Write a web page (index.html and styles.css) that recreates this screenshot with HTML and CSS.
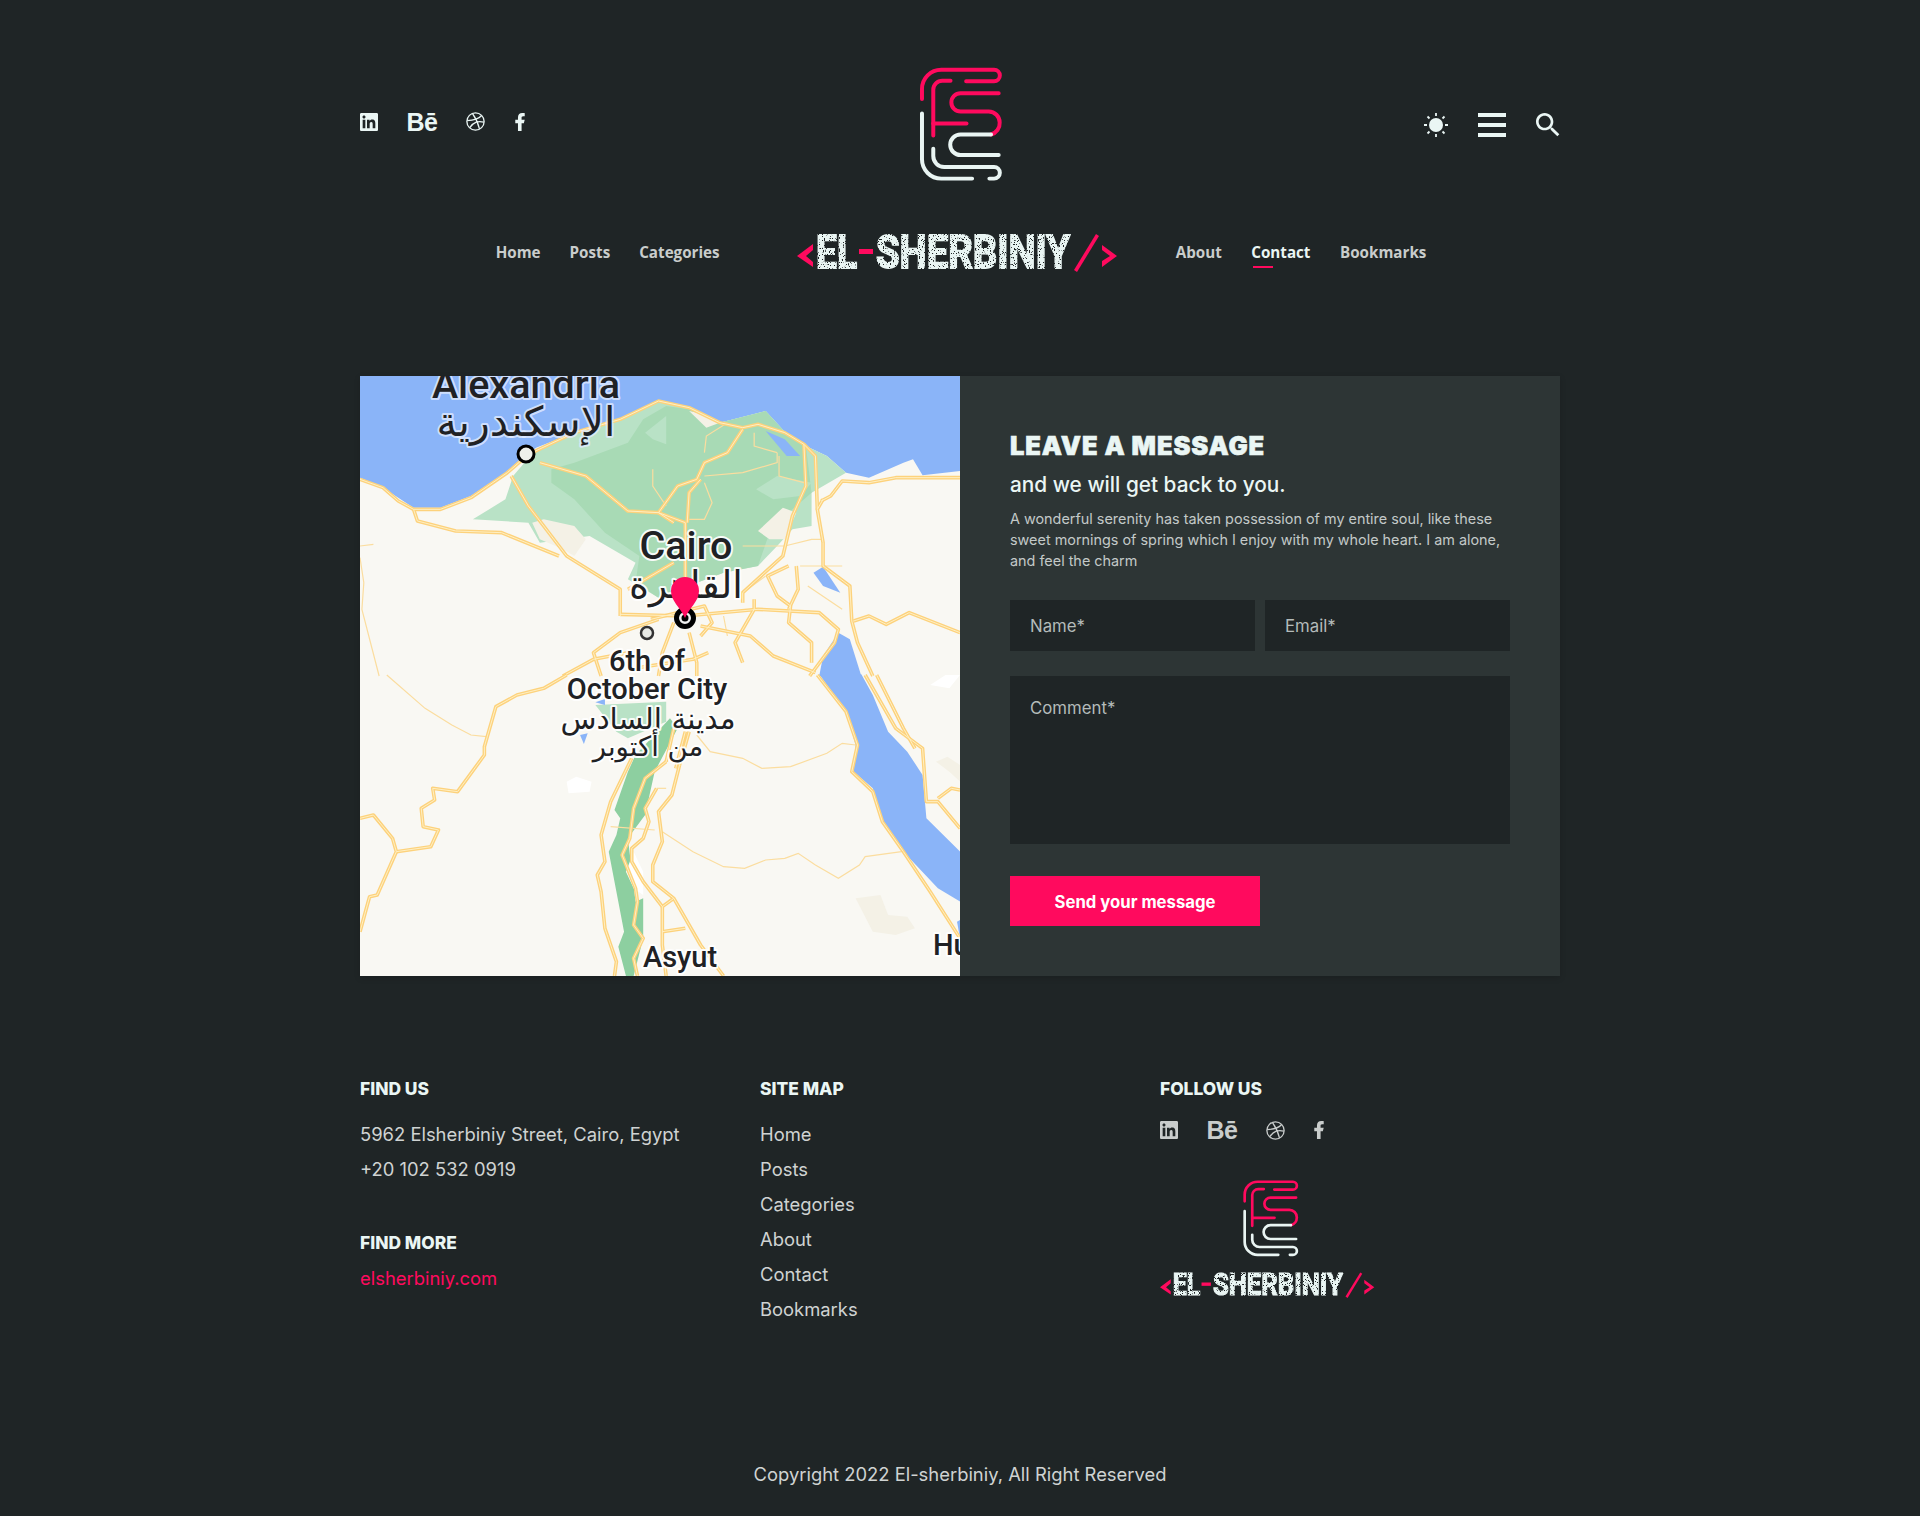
FILE: index.html
```html
<!DOCTYPE html>
<html lang="en">
<head>
<meta charset="utf-8">
<title>Contact - El-Sherbiniy</title>
<link rel="stylesheet" href="styles.css">
</head>
<body>
<svg class="defs" width="0" height="0" aria-hidden="true">
  <defs>
    <filter id="worn" x="0" y="0" width="100%" height="100%">
      <feTurbulence type="fractalNoise" baseFrequency="0.8" numOctaves="2" seed="4" result="n"/>
      <feColorMatrix in="n" type="matrix" values="0 0 0 0 0  0 0 0 0 0  0 0 0 0 0  0 0 0 -14 9.600" result="m"/>
      <feComposite in="SourceGraphic" in2="m" operator="in"/>
    </filter>
    <symbol id="logo-mark" viewBox="412 79 256 352">
      <g class="mk-red">
        <path d="M424 178V148a58 58 0 0 1 58-58H641a17.500 17.500 0 0 1 0 35H557"/>
        <path d="M458 288V150a27 27 0 0 1 27-27H510"/>
        <path d="M458 252H558"/>
        <path d="M655 161H540a27.500 27.500 0 0 0 0 55H625a33 33 0 0 1 33 33a35 35 0 0 1-26 36"/>
      </g>
      <g class="mk-white">
        <path d="M632 285H540a31 31 0 0 0 0 62H655"/>
        <path d="M458 328V350a33 33 0 0 0 33 33H641a17.500 17.500 0 0 1 0 35H627"/>
        <path d="M424 222V360a58 58 0 0 0 58 58H575"/>
      </g>
    </symbol>
    <symbol id="wordmark" viewBox="0 0 321 40">
      <polygon class="wm-red" points="0,24 16,12 16,18 9,24 16,30 16,35"/>
      <g class="wm-text" filter="url(#worn)">
        <text x="19" y="35.500" textLength="41" lengthAdjust="spacingAndGlyphs">EL</text>
        <text x="79" y="35.500" textLength="194" lengthAdjust="spacingAndGlyphs">SHERBINIY</text>
      </g>
      <rect class="wm-red" x="62" y="17" width="14" height="5"/>
      <polygon class="wm-red" points="277,38 299,2 302,4 280,40"/>
      <polygon class="wm-red" points="305,13 320,24 305,35 305,29 313,24 305,18"/>
    </symbol>
    <symbol id="i-in" viewBox="0 0 24 24"><path d="M20.447 20.452h-3.554v-5.569c0-1.328-.027-3.037-1.852-3.037-1.853 0-2.136 1.445-2.136 2.939v5.667H9.351V9h3.414v1.561h.046c.477-.9 1.637-1.85 3.37-1.850 3.601 0 4.267 2.370 4.267 5.455v6.286zM5.337 7.433c-1.144 0-2.063-.926-2.063-2.065 0-1.138.92-2.063 2.063-2.063 1.14 0 2.064.925 2.064 2.063 0 1.139-.925 2.065-2.064 2.065zm1.782 13.019H3.555V9h3.564v11.452zM22.225 0H1.771C.792 0 0 .774 0 1.729v20.542C0 23.227.792 24 1.771 24h20.451C23.200 24 24 23.227 24 22.271V1.729C24 .774 23.200 0 22.222 0h.003z"/></symbol>
    <symbol id="i-dr" viewBox="1 1 22 22"><circle class="line" cx="12" cy="12" r="10"/><path class="line" d="M8.560 2.750c4.370 6.030 6.020 9.420 8.030 17.720m2.540-15.380c-3.720 4.350-8.940 5.660-16.880 5.850m19.500 1.900c-3.500-.93-6.630-.82-8.940 0-2.580.92-5.010 2.860-7.440 6.320"/></symbol>
    <symbol id="i-fb" viewBox="7 2 10.500 20"><path d="M14 13.500h2.500l1-4H14v-2c0-1.030 0-2 2-2h1.500V2.140c-.326-.043-1.557-.14-2.857-.14C11.928 2 10 3.657 10 6.700v2.800H7v4h3V22h4v-8.500z"/></symbol>
    <g id="r4">
      <path d="M0,310L60,335L100,375L140,400L210,400L290,365L385,290L440,235L560,170L680,130L780,75L860,95L940,140L1000,155L1040,145L1110,170L1160,205L1190,240L1195,400"/>
      <path d="M395,300L440,390L540,540L680,640L680,720"/>
      <path d="M470,260L590,300L700,405L780,410L850,440L850,600L855,640"/>
      <path d="M1000,160L960,230L900,260L880,310L830,330L780,410L820,440"/>
      <path d="M890,310L860,350L855,440"/>
      <path d="M140,400L150,435L250,465L370,470L520,540"/>
      <path d="M700,640L820,560"/>
      <path d="M1160,205L1165,330L1130,420L1105,540L1000,650L1000,680"/>
      <path d="M1210,370L1195,400L1210,500L1210,570L1280,630L1285,735L1300,800L1340,900"/>
      <path d="M1568,305L1400,305L1330,320L1260,315L1230,360L1205,375"/>
      <path d="M1290,735L1330,720L1375,745L1435,710L1568,770"/>
      <path d="M680,715L850,720L1040,700L1200,710L1250,760L1240,800L1175,900"/>
      <path d="M1030,670V700L980,800L1000,860"/>
      <path d="M890,750L1020,780L1080,840L1190,890"/>
      <path d="M780,730L680,770L610,830L630,900"/>
      <path d="M820,740L790,830L780,900"/>
      <path d="M860,770L880,860V900"/>
      <path d="M1120,570L1065,600L1090,660L1125,690L1120,740L1180,800V860"/>
      <path d="M1140,570L1145,640L1120,700"/>
      <path d="M530,900L610,850L700,830"/>
      <path d="M760,730L900,690L920,740L890,780"/>
      <path d="M700,880L870,850L910,830"/>
    </g>
    <g id="r5">
      <path d="M0,430L35,420L85,490L95,530L45,660L25,665L0,770"/>
      <path d="M95,530L185,515L205,465L165,455L160,400L195,375L190,340L255,350L325,240L325,215L355,95L410,60L480,40L540,0"/>
      <path d="M710,250L655,380L630,480L640,560L620,600L630,650L640,760L670,860L665,903"/>
      <path d="M800,260L745,310L715,400L705,490L685,540L720,640L725,680L715,750L740,790L715,850L725,903"/>
      <path d="M835,270L815,360L780,410L790,500L765,570L765,620L820,670L890,810L950,903"/>
      <path d="M775,340L745,400L755,440L740,490L710,520L710,560L740,620L790,695L820,670"/>
      <path d="M790,695V810L800,903"/>
      <path d="M790,770L850,760"/>
      <path d="M1195,0L1270,110L1300,210L1285,290L1340,350L1365,440L1420,530L1490,650L1568,790"/>
      <path d="M1320,0L1400,160L1470,220L1480,380L1510,380L1568,460"/>
      <path d="M1350,0L1420,160L1450,220"/>
      <path d="M1510,370L1545,340L1568,345"/>
      <path d="M820,160L800,260M850,170L825,280M860,170L835,270"/>
    </g>
  </defs>
</svg>

<div class="page">
  <header class="site-header">
    <div class="top-row">
      <div class="socials">
        <a class="soc" href="#"><svg class="ic-in"><use href="#i-in"/></svg></a>
        <a class="soc be" href="#">Bē</a>
        <a class="soc" href="#"><svg class="ic-dr"><use href="#i-dr"/></svg></a>
        <a class="soc soc-f" href="#"><svg class="ic-fb"><use href="#i-fb"/></svg></a>
      </div>
      <svg class="logo-lg"><use href="#logo-mark"/></svg>
      <div class="tools">
        <svg class="tool-sun" viewBox="0 0 24 24">
          <circle cx="12" cy="12" r="7"/>
          <g class="rays"><path d="M12 0v3M12 21v3M0 12h3M21 12h3M3.500 3.500l2 2M18.500 18.500l2 2M3.500 20.500l2-2M18.500 5.500l2-2"/></g>
        </svg>
        <div class="burger"><span></span><span></span><span></span></div>
        <svg class="tool-search" viewBox="3 3 18 18"><path d="M15.500 14h-.79l-.28-.27C15.410 12.590 16 11.110 16 9.500 16 5.910 13.090 3 9.500 3S3 5.910 3 9.500 5.910 16 9.500 16c1.610 0 3.090-.59 4.230-1.570l.27.28v.79l5 4.990L20.490 19l-4.990-5zm-6 0C7.010 14 5 11.990 5 9.500S7.010 5 9.500 5 14 7.010 14 9.500 11.990 14 9.500 14z"/></svg>
      </div>
    </div>
    <nav class="nav-row">
      <div class="nav-group nav-left">
        <a href="#">Home</a><a href="#">Posts</a><a href="#">Categories</a>
      </div>
      <svg class="wm-lg"><use href="#wordmark"/></svg>
      <div class="nav-group nav-right">
        <a href="#">About</a><a class="active" href="#">Contact</a><a href="#">Bookmarks</a>
      </div>
    </nav>
  </header>

  <main class="contact">
    <svg class="map" viewBox="0 0 600 600" role="img" aria-label="Map of northern Egypt">
      <rect class="land" width="600" height="600"/>
      <g transform="scale(.38270 .33333)">
        <polygon class="sea" points="0,0 1568,0 1568,285 1470,298 1445,250 1420,260 1330,305 1270,290 1220,240 1165,210 1120,180 1060,105 940,140 860,95 780,75 680,130 560,170 460,215 380,290 290,360 210,395 140,395 60,335 0,305"/>
        <polygon class="g-light" points="400,300 460,220 560,170 680,130 780,75 860,95 940,140 1060,105 1120,180 1165,210 1220,240 1270,290 1180,350 1180,450 1130,460 1090,510 1040,570 950,590 880,620 780,665 700,610 720,560 600,480 470,500 440,440 295,430 380,370"/>
        <polygon class="g-dark" points="500,280 560,260 700,200 740,130 800,90 860,100 940,140 1060,105 1120,180 1165,210 1180,350 1130,400 1070,470 1040,570 950,590 880,620 780,665 720,620 730,540 640,470 560,370 500,320"/>
        <polygon class="g-light" points="745,170 800,120 800,205 765,190"/>
        <polygon class="g-light" points="1035,340 1090,300 1180,320 1150,360 1080,370"/>
        <polygon class="beige" points="450,440 480,430 560,450 590,490 560,540 530,520 470,490"/>
        <polygon class="beige" points="1040,465 1105,395 1140,410 1110,490 1070,490"/>
        <polygon class="beige" points="860,105 900,115 940,140 905,155"/>
        <polygon class="sea" points="1185,590 1210,572 1255,650 1210,630"/>
        <polygon class="sea" points="1060,165 1110,190 1150,240 1115,240"/>
        <polygon class="sea" points="1200,900 1210,840 1250,770 1280,790 1310,900"/>
        <g class="thin">
          <path d="M765,280V330L800,390M900,300L1000,290L1090,260V230M1095,240V300L1160,320M1030,170V210L1090,230M900,230L905,180L960,140M900,320L920,380L900,430H860M0,510L35,505M0,545L10,620L5,700L50,900"/>
          <path d="M1000,510H1110L1180,490H1210M1150,570H1260M1170,630L1260,700M1000,650L1060,600M950,720L960,780"/>
        </g>
        <use class="road-out" href="#r4"/>
        <use class="road-in" href="#r4"/>
      </g>
      <g transform="translate(0 299) scale(.38270 .33333)">
        <polygon class="sea" points="1200,-2 1310,-2 1340,60 1380,170 1430,230 1470,300 1480,430 1568,530 1568,680 1510,640 1420,530 1360,430 1340,340 1290,290 1295,210 1270,110"/>
        <polygon class="sea" points="1560,740 1568,735 1568,790"/>
        <polygon class="beige" points="1295,670 1360,660 1380,720 1430,725 1450,760 1400,780 1340,770"/>
        <polygon class="beige" points="1505,260 1535,245 1568,270 1568,320 1540,290"/>
        <polygon class="white" points="1490,30 1530,0 1568,0 1540,40"/>
        <polygon class="white" points="540,320 565,305 605,320 600,350 545,355"/>
        <polygon class="g-deep" points="810,130 830,160 770,290 745,420 700,490 720,680 740,670 740,790 715,903 695,903 675,815 690,770 650,530 670,480 680,430 665,405 700,290 720,240"/>
        <polygon class="g-light" points="615,90 800,80 800,140 700,190 670,170"/>
        <polygon class="white" points="715,530 740,590 740,660 715,640 695,590"/>
        <polygon class="sea" points="615,82 640,72 640,90"/>
        <polygon class="sea" points="575,180 595,175 585,207"/>
        <g class="thin">
          <path d="M655,455L770,465"/>
          <path d="M790,470L870,530L950,575L1005,580L1060,555L1110,550L1145,535L1190,570L1250,610L1305,570L1320,545L1415,530"/>
          <path d="M880,180L915,230L1000,250L1050,280L1125,275L1220,235L1260,205L1295,210"/>
          <path d="M70,0L170,100L240,150L290,180L330,185"/>
          <path d="M775,340H800"/>
        </g>
        <use class="road-out" href="#r5"/>
        <use class="road-in" href="#r5"/>
      </g>

      <g class="lbl lbl-water">
        <text class="en-lg" x="166" y="22">Alexandria</text>
        <text class="ar-lg" x="166" y="60">الإسكندرية</text>
      </g>
      <circle class="dot" cx="166" cy="78" r="8"/>
      <g class="lbl">
        <text class="en-lg" x="326" y="183">Cairo</text>
        <text class="ar-lg ar-cairo" x="326" y="222">القاهرة</text>
        <text class="en-md" x="287" y="295">6th of</text>
        <text class="en-md" x="287" y="323">October City</text>
        <text class="ar-md" x="288" y="353">مدينة السادس</text>
        <text class="ar-md ar-sm" x="288" y="380">من أكتوبر</text>
        <text class="en-md" x="320" y="591">Asyut</text>
        <text class="en-md start" x="573" y="579">Hu</text>
      </g>
      <circle class="dot-sm" cx="287" cy="257" r="6"/>
      <circle class="ring" cx="325" cy="242" r="8.500"/>
      <circle class="core" cx="325" cy="242" r="3.500"/>
      <path class="pin" d="M325 242C320 231 311 225 311 215a14 14 0 0 1 28 0C339 225 330 231 325 242Z"/>
    </svg>

    <section class="panel">
      <h2 class="panel-title">LEAVE A MESSAGE</h2>
      <h3 class="panel-sub">and we will get back to you.</h3>
      <p class="panel-text">A wonderful serenity has taken possession of my entire soul, like these sweet mornings of spring which I enjoy with my whole heart. I am alone, and feel the charm</p>
      <form class="form">
        <div class="form-row">
          <input class="field" type="text" placeholder="Name*">
          <input class="field" type="email" placeholder="Email*">
        </div>
        <textarea class="field area" placeholder="Comment*"></textarea>
        <button class="send" type="button">Send your message</button>
      </form>
    </section>
  </main>

  <footer class="footer">
    <div class="cols">
      <div class="col">
        <h4>FIND US</h4>
        <p>5962 Elsherbiniy Street, Cairo, Egypt</p>
        <p>+20 102 532 0919</p>
        <h4 class="more">FIND MORE</h4>
        <p><a class="pink" href="#">elsherbiniy.com</a></p>
      </div>
      <div class="col">
        <h4>SITE MAP</h4>
        <p>Home</p><p>Posts</p><p>Categories</p><p>About</p><p>Contact</p><p>Bookmarks</p>
      </div>
      <div class="col">
        <h4>FOLLOW US</h4>
        <div class="socials foot-soc">
          <a class="soc" href="#"><svg class="ic-in"><use href="#i-in"/></svg></a>
          <a class="soc be" href="#">Bē</a>
          <a class="soc" href="#"><svg class="ic-dr"><use href="#i-dr"/></svg></a>
          <a class="soc" href="#"><svg class="ic-fb"><use href="#i-fb"/></svg></a>
        </div>
        <div class="foot-brand">
          <svg class="logo-sm"><use href="#logo-mark"/></svg>
          <svg class="wm-sm"><use href="#wordmark"/></svg>
        </div>
      </div>
    </div>
    <p class="copy">Copyright 2022 El-sherbiniy, All Right Reserved</p>
  </footer>
</div>
</body>
</html>
```
FILE: styles.css
```css
* { box-sizing: border-box; }
html, body { margin: 0; padding: 0; }
body {
  background: #1f2526;
  color: #cfd3d2;
  font-family: Inter, "Open Sans", sans-serif;
  height: 1516px;
  overflow: hidden;
}
a { color: inherit; text-decoration: none; }
.defs { position: absolute; }

.page { width: 1200px; margin: 0 auto; padding-top: 66px; }

/* header */
.top-row { display: flex; justify-content: space-between; align-items: center; height: 117px; }
.socials { display: flex; align-items: center; gap: 28.500px; color: #eaf6f4; width: 300px; margin-top: -6px; }
.soc { display: flex; align-items: center; height: 18px; }
.soc-f { margin-left: 1px; }
.soc svg { fill: currentColor; display: block; }
.ic-in { width: 18px; height: 18px; }
.ic-dr { width: 19px; height: 19px; }
.ic-fb { width: 10px; height: 18px; }
.line { fill: none; stroke: currentColor; stroke-width: 1.5; }
.be { font: 700 25px/18px "Liberation Sans", sans-serif; width: 31px; letter-spacing: -.5px; }

.logo-lg { width: 85px; height: 117px; display: block; }
.mk-red, .mk-white { fill: none; stroke-width: 12; stroke-linecap: round; }
.mk-red { stroke: #ff0a5e; }
.mk-white { stroke: #e9f5f3; }

.tools { display: flex; align-items: center; justify-content: flex-end; gap: 30px; width: 300px; margin-top: 1px; }
.tool-sun { width: 24px; height: 24px; fill: #eaf6f4; }
.rays { fill: none; stroke: #eaf6f4; stroke-width: 1.8; }
.burger { width: 28px; height: 24px; display: flex; flex-direction: column; justify-content: space-between; }
.burger span { height: 4px; background: #eaf6f4; display: block; }
.tool-search { width: 24px; height: 24px; fill: #eaf6f4; }

.nav-row { display: flex; align-items: center; justify-content: center; height: 40px; margin-top: 49px; padding-left: 2px; }
.nav-group { display: flex; gap: 29.500px; font: 700 15.200px/20px "Open Sans", sans-serif; color: #c9cdcc; }
.nav-left { gap: 29px; margin-right: 77px; }
.nav-right { margin-left: 58px; }
.nav-group a { position: relative; }
.nav-group .active { color: #eaf6f4; }
.nav-group .active::after {
  content: "";
  position: absolute;
  left: 2px;
  bottom: -6px;
  width: 20px;
  height: 2px;
  background: #ff0a5e;
}
.wm-lg { width: 321px; height: 40px; display: block; }
.wm-red { fill: #ff0a5e; }
.wm-text text {
  font-family: Roboto, sans-serif;
  font-weight: 700;
  font-size: 46px;
  fill: #e9f5f3;
  stroke: #e9f5f3;
  stroke-width: 1.800px;
}

/* contact */
.contact { display: grid; grid-template-columns: 600px 600px; margin-top: 104px; box-shadow: 0 2px 6px rgba(0,0,0,.15); }
.map { display: block; width: 600px; height: 600px; }
.land { fill: #f9f8f3; }
.sea { fill: #8ab4f8; }
.g-light { fill: #b9e2c6; }
.g-dark { fill: #a8dab5; }
.g-deep { fill: #8dcfa0; }
.beige { fill: #f4f1e6; }
.white { fill: #ffffff; }
.road-out, .road-in { fill: none; stroke-linejoin: round; }
.road-out { stroke: #fdd27c; stroke-width: 3.600px; }
.road-in { stroke: #fff0c4; stroke-width: 1px; }
#r4 path, #r5 path { vector-effect: non-scaling-stroke; }
.thin path {
  fill: none;
  stroke: #fbdd9f;
  stroke-width: 1.200;
  vector-effect: non-scaling-stroke;
}
.lbl text {
  text-anchor: middle;
  fill: #202124;
  stroke: rgba(255,255,255,.92);
  stroke-width: 4px;
  paint-order: stroke;
  stroke-linejoin: round;
}
.lbl-water text { stroke: rgba(225,235,255,.8); }
.lbl .start { text-anchor: start; }
.en-lg { font: 500 39.500px Roboto, sans-serif; }
.en-md { font: 500 29px Roboto, sans-serif; }
.ar-lg { font: 400 41px "DejaVu Sans", sans-serif; }
.ar-cairo { font-size: 38px; }
.ar-md { font: 400 29.500px "DejaVu Sans", sans-serif; }
.ar-sm { font-size: 27.500px; }
.dot { fill: #eef0ea; stroke: #000; stroke-width: 3; }
.dot-sm { fill: #e8eae5; stroke: #333; stroke-width: 2.5; }
.ring { fill: #f0f0f0; stroke: #000; stroke-width: 5; }
.core { fill: #000; }
.pin { fill: #ff0a5e; }

.panel { background: #2d3535; padding: 50px; color: #eaf6f4; height: 600px; }
.panel-title { margin: 0; font: 900 25.500px/40px Inter, sans-serif; letter-spacing: .9px; -webkit-text-stroke: .6px #eaf6f4; }
.panel-sub { margin: 4px 0 0; font: 500 20.800px/30px Inter, sans-serif; }
.panel-text { margin: 8px 0 0; font: 400 14.400px/21px Inter, sans-serif; color: #c3c9c8; }
.form { margin-top: 29px; }
.form-row { display: grid; grid-template-columns: 1fr 1fr; gap: 10px; }
.field {
  display: block;
  width: 100%;
  height: 51px;
  border: 0;
  border-radius: 0;
  background: #1f2526;
  padding: 0 20px;
  font: 400 16.800px/21px Inter, sans-serif;
  color: #eaf6f4;
}
.field::placeholder { color: #b4bbba; opacity: 1; }
.area { height: 168px; margin-top: 25px; padding: 22px 20px; resize: none; }
.send {
  display: block;
  width: 250px;
  height: 50px;
  margin-top: 32px;
  border: 0;
  background: #ff0a5e;
  color: #fff;
  font: 700 16.700px/50px Inter, sans-serif;
}

/* footer */
.footer { margin-top: 101px; }
.cols { display: grid; grid-template-columns: 400px 400px 400px; }
.col h4 { margin: 0 0 16px; font: 800 17.400px/24px Inter, sans-serif; color: #eaf6f4; }
.col .more { margin: 44px 0 6px; }
.col p { margin: 0; font: 400 18.400px/35px Inter, sans-serif; color: #cfd3d2; }
.pink { color: #ff0a5e; }
.foot-soc { color: #c9cdcc; gap: 28.500px; margin-top: 20px; }
.foot-brand { width: 215px; display: flex; flex-direction: column; align-items: center; margin-top: 40px; }
.logo-sm { width: 57px; height: 79px; display: block; margin-left: 6px; }
.logo-sm .mk-red { stroke-width: 10; }
.wm-sm { width: 215px; height: 27px; display: block; margin-top: 13px; }
.copy { margin: 130px 0 0; text-align: center; font: 400 18.400px/35px Inter, sans-serif; color: #cfd3d2; }
```
